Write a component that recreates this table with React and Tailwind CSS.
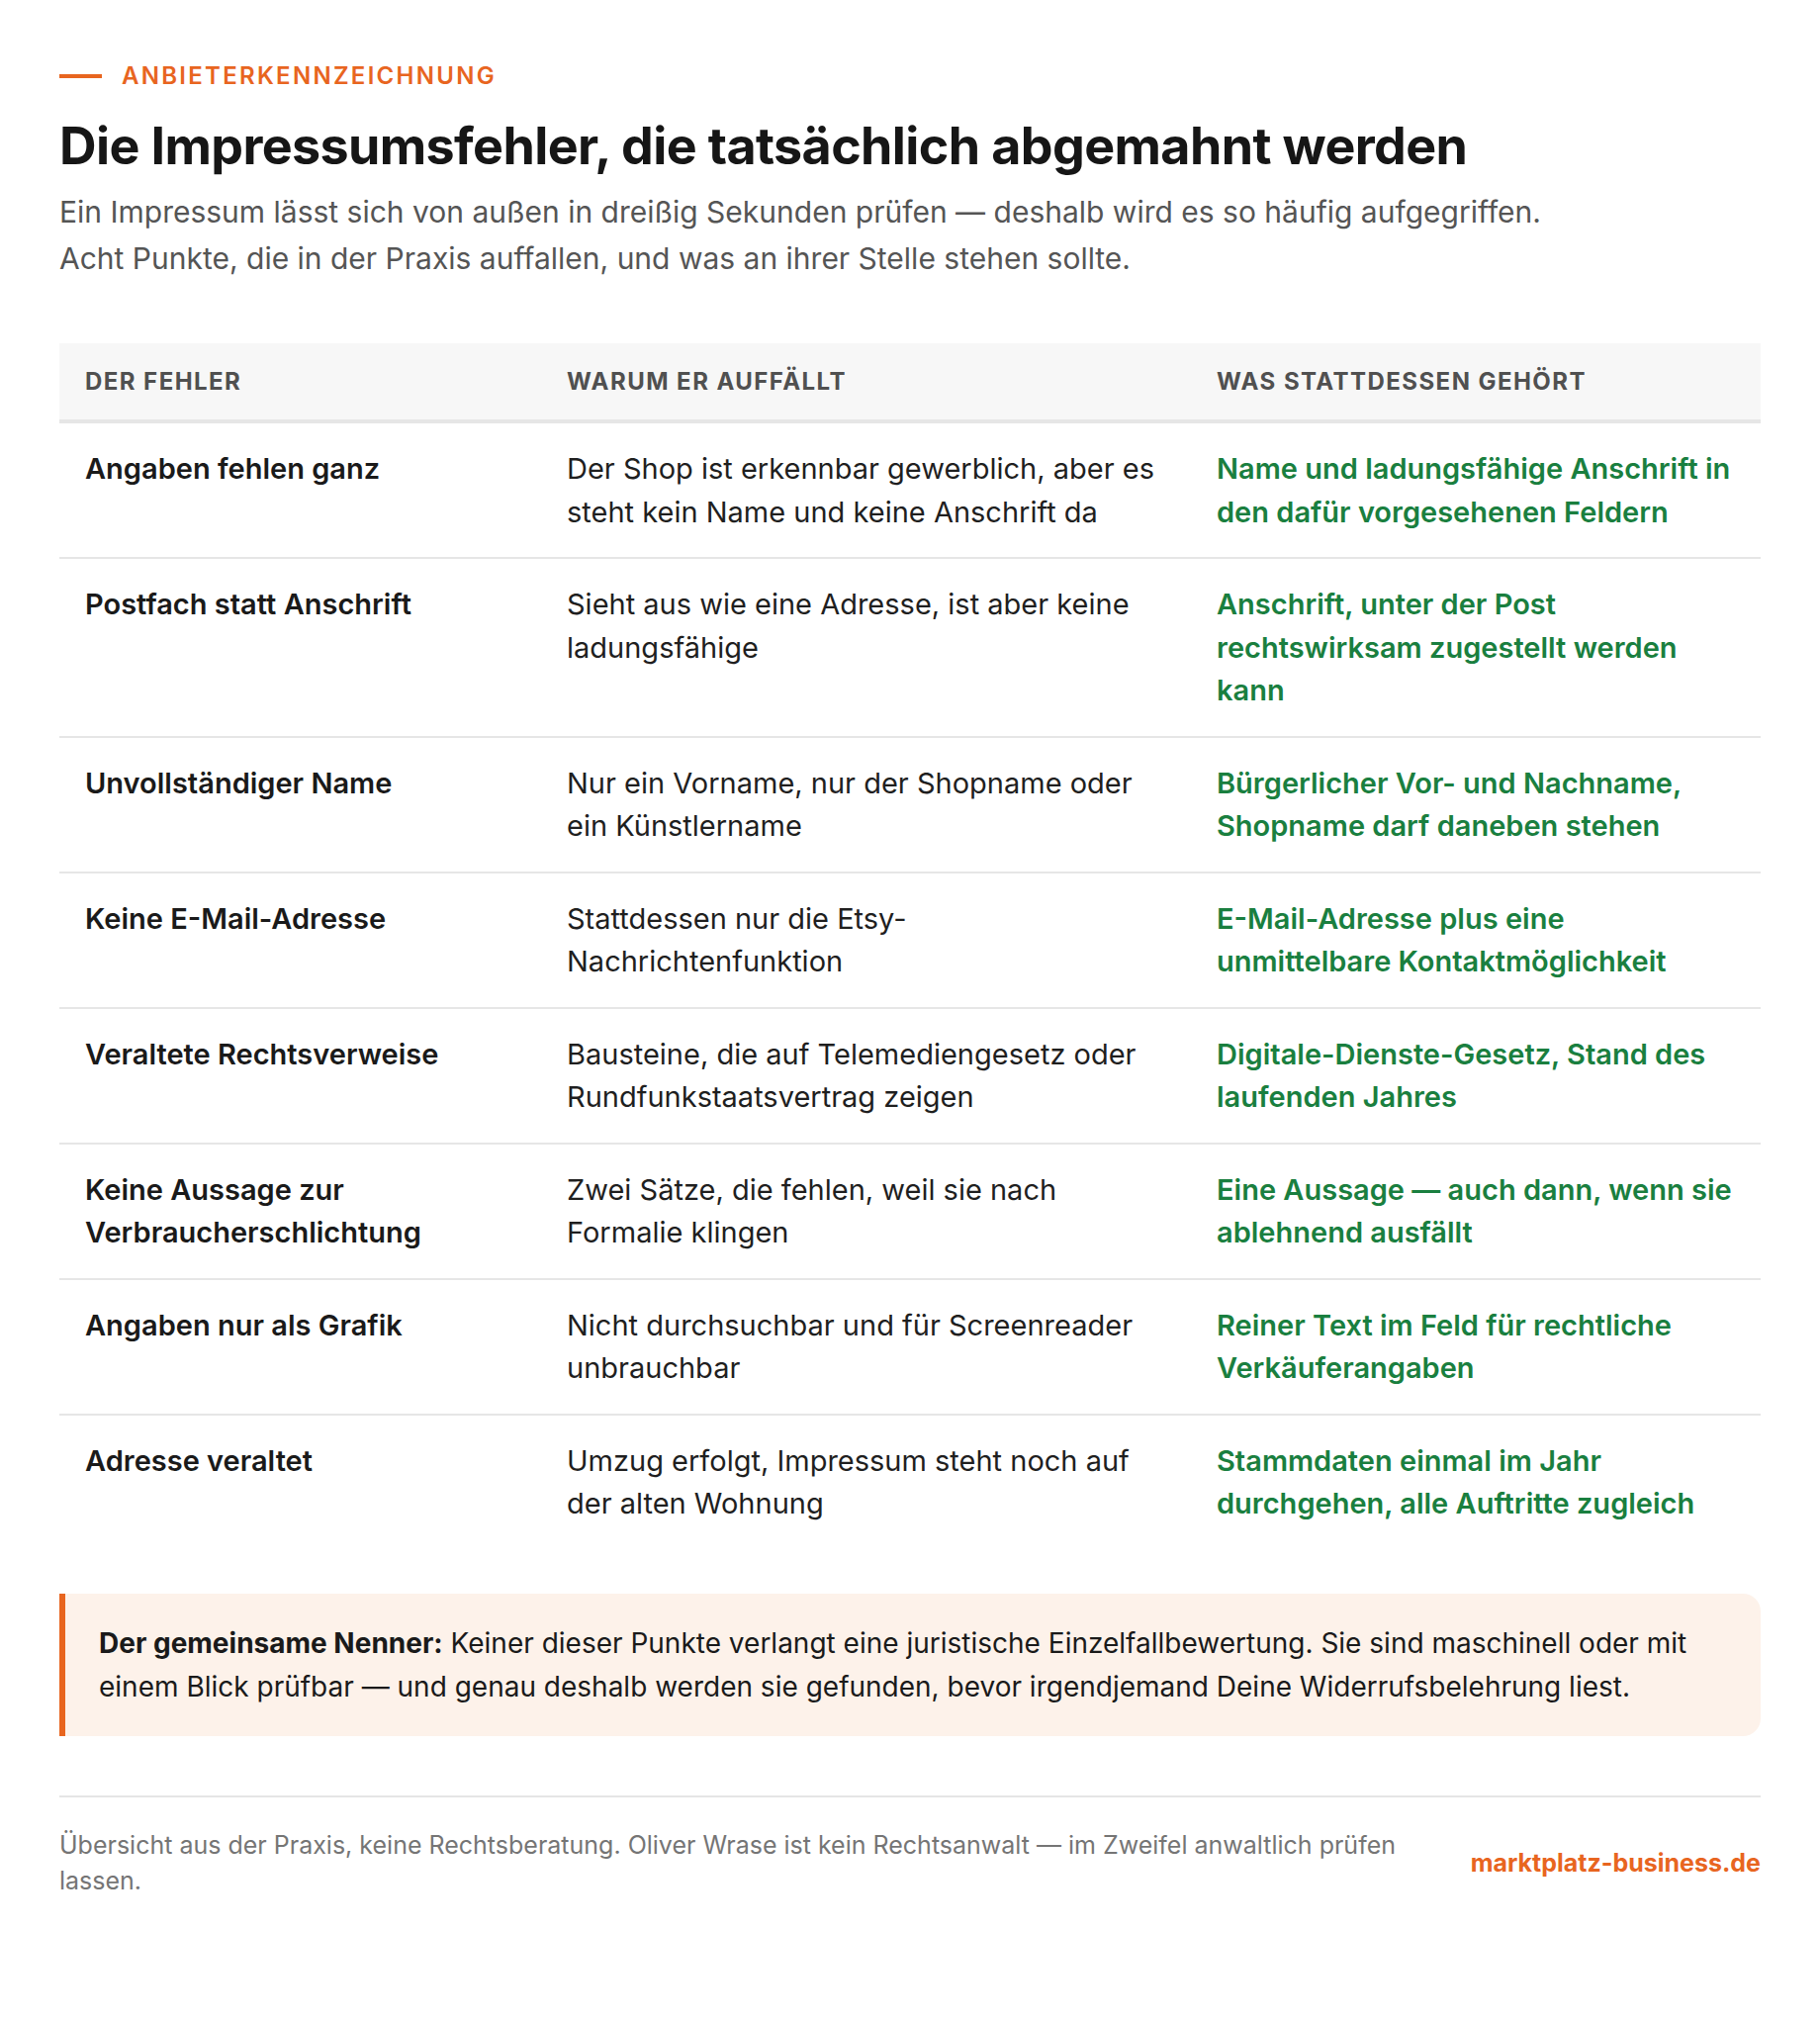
import React from "react";

const rows = [
  ["Angaben fehlen ganz", "Der Shop ist erkennbar gewerblich, aber es steht kein Name und keine Anschrift da", "Name und ladungsfähige Anschrift in den dafür vorgesehenen Feldern"],
  ["Postfach statt Anschrift", "Sieht aus wie eine Adresse, ist aber keine ladungsfähige", "Anschrift, unter der Post rechtswirksam zugestellt werden kann"],
  ["Unvollständiger Name", "Nur ein Vorname, nur der Shopname oder ein Künstlername", "Bürgerlicher Vor- und Nachname, Shopname darf daneben stehen"],
  ["Keine E-Mail-Adresse", "Stattdessen nur die Etsy-Nachrichtenfunktion", "E-Mail-Adresse plus eine unmittelbare Kontaktmöglichkeit"],
  ["Veraltete Rechtsverweise", "Bausteine, die auf Telemediengesetz oder Rundfunkstaatsvertrag zeigen", "Digitale-Dienste-Gesetz, Stand des laufenden Jahres"],
  ["Keine Aussage zur Verbraucherschlichtung", "Zwei Sätze, die fehlen, weil sie nach Formalie klingen", "Eine Aussage — auch dann, wenn sie ablehnend ausfällt"],
  ["Angaben nur als Grafik", "Nicht durchsuchbar und für Screenreader unbrauchbar", "Reiner Text im Feld für rechtliche Verkäuferangaben"],
  ["Adresse veraltet", "Umzug erfolgt, Impressum steht noch auf der alten Wohnung", "Stammdaten einmal im Jahr durchgehen, alle Auftritte zugleich"],
];

export default function App() {
  return (
    <div className="min-h-screen bg-white font-['Inter','Noto_Sans',sans-serif] text-[#1a1a1a] antialiased">
      <div className="px-[60px] pt-[59px] pb-[120px]">
        {/* Eyebrow */}
        <div className="flex items-center gap-5">
          <span className="block h-1 w-[43px] bg-[#e8651f]" />
          <span className="text-[24px] leading-[36px] font-semibold tracking-[0.095em] text-[#e8651f]">
            ANBIETERKENNZEICHNUNG
          </span>
        </div>

        {/* Heading */}
        <h1 className="mt-[22px] text-[52px] leading-[1.2] font-bold tracking-[-0.012em] text-[#161616]">
          Die Impressumsfehler, die tatsächlich abgemahnt werden
        </h1>
        <p className="mt-3 text-[30px] leading-[47px] text-[#555555]">
          Ein Impressum lässt sich von außen in dreißig Sekunden prüfen — deshalb wird es so häufig aufgegriffen.
          <br />
          Acht Punkte, die in der Praxis auffallen, und was an ihrer Stelle stehen sollte.
        </p>

        {/* Table */}
        <div className="mt-[62px]">
          <div className="grid grid-cols-[487px_657px_576px] bg-[#f7f7f7] border-b-4 border-[#e6e6e6]">
            {["DER FEHLER", "WARUM ER AUFFÄLLT", "WAS STATTDESSEN GEHÖRT"].map((h) => (
              <div
                key={h}
                className="px-[26px] pt-[21px] pb-5 text-[24px] leading-[36px] font-bold tracking-[0.06em] text-[#505050]"
              >
                {h}
              </div>
            ))}
          </div>
          {rows.map((r, i) => (
            <div
              key={i}
              className={
                i === rows.length - 1
                  ? "grid grid-cols-[487px_657px_576px]"
                  : "grid grid-cols-[487px_657px_576px] border-b-2 border-[#e6e6e6]"
              }
            >
              <div className="px-[26px] py-6 text-[29px] leading-[1.5] font-semibold text-[#1a1a1a]">
                {r[0]}
              </div>
              <div className="px-[26px] py-6 text-[29px] leading-[1.5] text-[#1f1f1f]">
                {r[1]}
              </div>
              <div className="px-[26px] py-6 text-[29px] leading-[1.5] font-semibold text-[#1a7f3f]">
                {r[2]}
              </div>
            </div>
          ))}
        </div>

        {/* Callout */}
        <div className="mt-[45px] rounded-r-[18px] border-l-[6px] border-[#e8651f] bg-[#fdf2ea] py-[28px] pl-[34px] pr-[34px]">
          <p className="text-[28px] leading-[44px] text-[#1a1a1a]">
            <strong className="font-bold">Der gemeinsame Nenner:</strong> Keiner dieser Punkte verlangt eine juristische
            Einzelfallbewertung. Sie sind maschinell oder mit einem Blick prüfbar — und genau deshalb werden sie
            gefunden, bevor irgendjemand Deine Widerrufsbelehrung liest.
          </p>
        </div>

        {/* Footer */}
        <div className="mt-[60px] flex items-center justify-between gap-10 border-t-2 border-[#e5e5e5] pt-[30px]">
          <p className="flex-1 text-[25px] leading-[36.5px] text-[#757575]">
            Übersicht aus der Praxis, keine Rechtsberatung. Oliver Wrase ist kein Rechtsanwalt — im Zweifel anwaltlich
            prüfen lassen.
          </p>
          <span className="shrink-0 whitespace-nowrap text-[25px] font-bold text-[#e8651f]">
            marktplatz-business.de
          </span>
        </div>
      </div>
    </div>
  );
}
